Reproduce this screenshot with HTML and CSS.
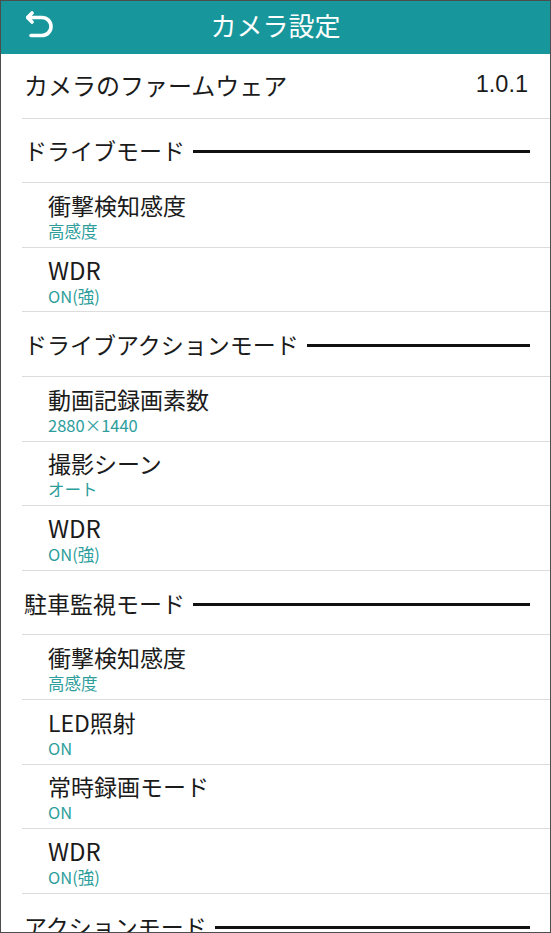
FILE: index.html
```html
<!DOCTYPE html>
<html lang="ja">
<head>
    <meta charset="UTF-8">
    <meta name="viewport" content="width=device-width, initial-scale=1.0">
    <title>カメラ設定</title>
    <link rel="stylesheet" href="styles.css">
</head>
<body>
    <div class="screen">
        <header class="appbar">
            <svg class="back" viewBox="0 0 30 30" width="30" height="30">
                <path d="M6 5 L1.5 9.5 L6 14 M2 9.5 H16 A9 9 0 0 1 16 27.5 H5" fill="none" stroke="#fff" stroke-width="3.6" stroke-linecap="round" stroke-linejoin="round"/>
            </svg>
            <h1 class="title">カメラ設定</h1>
        </header>

        <div class="list">
            <div class="row top">
                <span class="label">カメラのファームウェア</span>
                <span class="version">1.0.1</span>
            </div>

            <div class="row section"><span>ドライブモード</span><i class="rule"></i></div>
            <div class="row item"><span class="name">衝撃検知感度</span><span class="value">高感度</span></div>
            <div class="row item"><span class="name latin">WDR</span><span class="value">ON(強)</span></div>

            <div class="row section"><span>ドライブアクションモード</span><i class="rule"></i></div>
            <div class="row item"><span class="name">動画記録画素数</span><span class="value">2880×1440</span></div>
            <div class="row item"><span class="name">撮影シーン</span><span class="value">オート</span></div>
            <div class="row item"><span class="name latin">WDR</span><span class="value">ON(強)</span></div>

            <div class="row section"><span>駐車監視モード</span><i class="rule"></i></div>
            <div class="row item"><span class="name">衝撃検知感度</span><span class="value">高感度</span></div>
            <div class="row item"><span class="name">LED照射</span><span class="value">ON</span></div>
            <div class="row item"><span class="name">常時録画モード</span><span class="value">ON</span></div>
            <div class="row item"><span class="name latin">WDR</span><span class="value">ON(強)</span></div>

            <div class="row section"><span>アクションモード</span><i class="rule"></i></div>
        </div>
    </div>
</body>
</html>
```

FILE: styles.css
```css
* {
    box-sizing: border-box;
}

html,
body {
    margin: 0;
    padding: 0;
    background: #fff;
}

body {
    font-family: "Noto Sans CJK JP", "Noto Sans", sans-serif;
    color: #1b1b1b;
}

.screen {
    width: 551px;
    height: 933px;
    border: 1px solid #4d4d4d;
    overflow: hidden;
    display: flex;
    flex-direction: column;
}

.appbar {
    flex: none;
    height: 53px;
    padding-bottom: 5px;
    background: #17979b;
    display: flex;
    align-items: center;
    justify-content: center;
    position: relative;
}

.back {
    position: absolute;
    left: 25px;
    top: 7px;
}

.title {
    margin: 0;
    font-weight: 400;
    font-size: 26px;
    line-height: 34px;
    color: #fff;
}

.list {
    display: flex;
    flex-direction: column;
}

.row {
    flex: none;
    height: 64.6px;
    margin-left: 21px;
    border-bottom: 1px solid #dcdcdc;
}

.top {
    display: flex;
    align-items: center;
    justify-content: space-between;
    padding: 0 22px 2px 2px;
    font-size: 24px;
}

.version {
    font-family: "Liberation Sans", sans-serif;
    font-size: 23.5px;
}

.section {
    display: flex;
    align-items: center;
    gap: 8px;
    padding: 0 20px 0 2px;
    font-size: 23px;

    & .rule {
        flex: 1;
        height: 3px;
        margin-top: 3px;
        background: #111;
    }
}

.item {
    display: flex;
    flex-direction: column;
    justify-content: center;
    padding: 3px 0 0 26px;

    & .name {
        font-size: 23px;
        line-height: 26px;
    }

    & .latin {
        font-size: 24px;
    }

    & .value {
        margin-top: 3px;
        font-size: 16.5px;
        line-height: 20px;
        color: #2e9e9c;
    }
}
```
